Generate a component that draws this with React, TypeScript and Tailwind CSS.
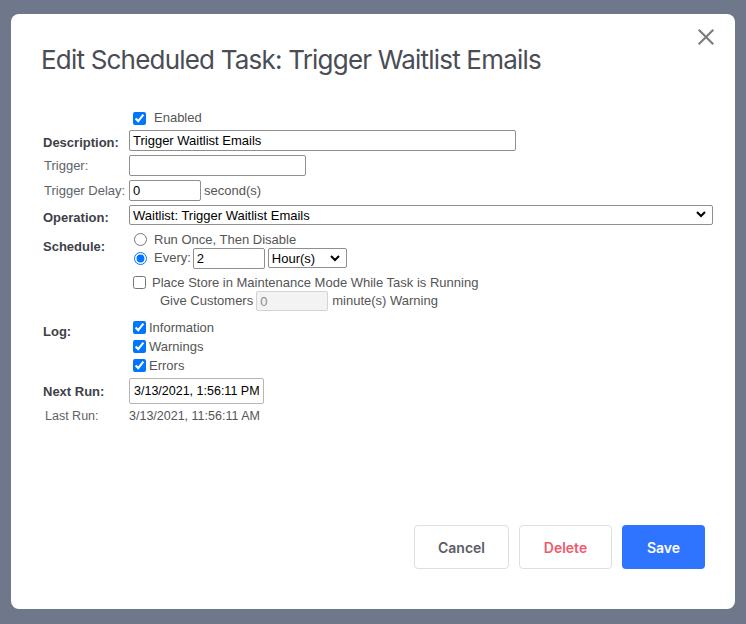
import React from 'react';

const labelBold = 'w-[99px] shrink-0 whitespace-nowrap pl-[13px] font-bold text-[#3f4148]';
const labelNormal = 'w-[99px] shrink-0 whitespace-nowrap pl-[14px] text-[#606368]';
const inputBase =
  'h-[21px] border border-[#8f8f8f] rounded-[2px] bg-white px-[3px] text-[13px] text-black outline-none';

const Check: React.FC<{ checked?: boolean; label: string; className?: string }> = ({ checked, label, className }) => (
  <label className={`flex items-center ${className ?? ''}`}>
    <input type="checkbox" defaultChecked={checked} className="m-0 ml-[4px] h-[13px] w-[13px] accent-[#0075ff]" />
    <span className="ml-[3px]">{label}</span>
  </label>
);

const App: React.FC = () => {
  return (
    <div className="h-[624px] w-[746px] overflow-hidden bg-[#6e788a] pt-[14px] pl-[11px]">
      <div className="relative h-[595px] w-[724px] rounded-[8px] bg-white">
        {/* Close */}
        <button className="absolute right-[20px] top-[14px] text-[#7b7d82]">
          <svg width="18" height="18" viewBox="0 0 18 18" fill="none" stroke="currentColor" strokeWidth="2.2" strokeLinecap="square">
            <path d="M2.5 2.5 L15.5 15.5 M15.5 2.5 L2.5 15.5" />
          </svg>
        </button>

        {/* Title */}
        <h1 className="pl-[30px] pt-[30px] font-['Inter',sans-serif] text-[26px] leading-[32px] tracking-[-0.8px] text-[#4a4d55]">
          Edit Scheduled Task: Trigger Waitlist Emails
        </h1>

        {/* Form */}
        <div className="mt-[32px] pl-[19px] font-['Liberation_Sans',Arial,sans-serif] text-[13px] text-[#555]">
          <div className="flex h-[20px] items-center pl-[99px]">
            <Check checked label="Enabled" className="gap-[5px]" />
          </div>

          <div className="flex h-[25px] items-center">
            <span className={`${labelBold} pt-[4px]`}>Description:</span>
            <input className={`${inputBase} w-[387px]`} defaultValue="Trigger Waitlist Emails" />
          </div>

          <div className="flex h-[25px] items-center">
            <span className={labelNormal}>Trigger:</span>
            <input className={`${inputBase} w-[177px]`} defaultValue="" />
          </div>

          <div className="flex h-[25px] items-center">
            <span className={labelNormal}>Trigger Delay:</span>
            <input className={`${inputBase} w-[72px]`} defaultValue="0" />
            <span className="ml-[3px]">second(s)</span>
          </div>

          <div className="flex h-[25px] items-center">
            <span className={`${labelBold} pt-[4px]`}>Operation:</span>
            <div className="relative">
              <select className="h-[20px] w-[584px] appearance-none rounded-[2px] border border-[#8f8f8f] bg-white pl-[3px] text-[13px] text-black outline-none">
                <option>Waitlist: Trigger Waitlist Emails</option>
              </select>
              <svg className="pointer-events-none absolute right-[7px] top-[6px]" width="10" height="7" viewBox="0 0 10 7" fill="none" stroke="#000" strokeWidth="2">
                <path d="M1 1 L5 5 L9 1" />
              </svg>
            </div>
          </div>

          {/* Schedule */}
          <div className="flex pt-[3px]">
            <span className={`${labelBold} pt-[6px]`}>Schedule:</span>
            <div className="flex flex-col">
              <label className="flex h-[17px] items-center pl-[5px]">
                <input type="radio" name="sched" className="m-0 h-[13px] w-[13px] accent-[#0075ff]" />
                <span className="ml-[7px]">Run Once, Then Disable</span>
              </label>
              <label className="flex h-[20px] items-center pl-[5px]">
                <input type="radio" name="sched" defaultChecked className="m-0 h-[13px] w-[13px] accent-[#0075ff]" />
                <span className="ml-[7px]">Every:</span>
                <input className={`${inputBase} ml-[2px] w-[72px]`} defaultValue="2" />
                <div className="relative ml-[3px]">
                  <select className="h-[20px] w-[79px] appearance-none rounded-[2px] border border-[#8f8f8f] bg-white pl-[3px] text-[13px] text-black outline-none">
                    <option>Hour(s)</option>
                  </select>
                  <svg className="pointer-events-none absolute right-[7px] top-[7px]" width="10" height="7" viewBox="0 0 10 7" fill="none" stroke="#000" strokeWidth="2">
                    <path d="M1 1 L5 5 L9 1" />
                  </svg>
                </div>
              </label>
              <label className="mt-[6px] flex h-[17px] items-center">
                <input type="checkbox" className="m-0 ml-[4px] h-[13px] w-[13px] accent-[#0075ff]" />
                <span className="ml-[6px]">Place Store in Maintenance Mode While Task is Running</span>
              </label>
              <div className="flex h-[20px] items-center pl-[31px]">
                <span>Give Customers</span>
                <input
                  disabled
                  className="ml-[3px] h-[20px] w-[72px] rounded-[2px] border border-[#d3d3d3] bg-[#f3f3f3] px-[3px] text-[13px] text-[#8a8a8a] outline-none"
                  defaultValue="0"
                />
                <span className="ml-[4px]">minute(s) Warning</span>
              </div>
            </div>
          </div>

          {/* Log */}
          <div className="mt-[7px] flex">
            <span className={`${labelBold} pt-[4px]`}>Log:</span>
            <div className="flex flex-col">
              <Check checked label="Information" className="h-[19px]" />
              <Check checked label="Warnings" className="h-[19px]" />
              <Check checked label="Errors" className="h-[19px]" />
            </div>
          </div>

          <div className="mt-[3px] flex h-[26px] items-center">
            <span className={`${labelBold} pt-[2px]`}>Next Run:</span>
            <input
              className="h-[26px] w-[135px] rounded-[2px] border border-[#b5b5b5] bg-white px-[4px] text-[12.5px] text-black outline-none"
              defaultValue="3/13/2021, 1:56:11 PM"
            />
          </div>

          <div className="mt-[2px] flex h-[20px] items-center">
            <span className={`${labelNormal} pl-[15px] text-[12.5px]`}>Last Run:</span>
            <span className="text-[12.5px]">3/13/2021, 11:56:11 AM</span>
          </div>
        </div>

        {/* Footer */}
        <div className="absolute bottom-[40px] right-[30px] flex gap-[10px] font-['Inter',sans-serif] text-[14px] font-semibold">
          <button className="h-[44px] w-[95px] rounded-[4px] border border-[#dedfe2] bg-white text-[#5a5d66]">Cancel</button>
          <button className="h-[44px] w-[93px] rounded-[4px] border border-[#dedfe2] bg-white text-[#f05a6e]">Delete</button>
          <button className="h-[44px] w-[83px] rounded-[4px] bg-[#2f74ff] text-white">Save</button>
        </div>
      </div>
    </div>
  );
};

export default App;
